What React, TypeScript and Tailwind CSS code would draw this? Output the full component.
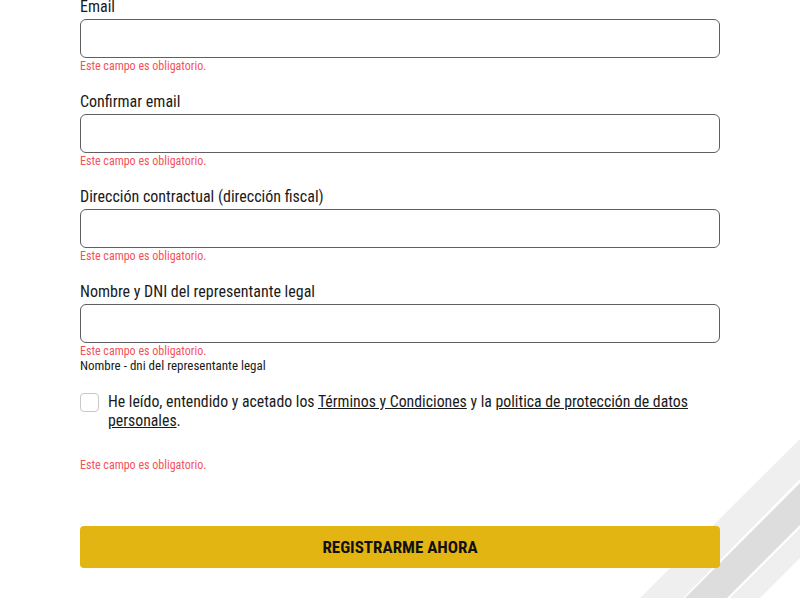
import React from "react";

const font = { fontFamily: '"Liberation Sans Narrow", "Roboto Condensed", Roboto, sans-serif' };

function Field({ label, helper }: { label: string; helper?: string }) {
  return (
    <div className="mb-[19px]">
      <div className="h-[20px] text-[16px] leading-[20px] text-[#1a1a1a]">{label}</div>
      <div className="mt-[2px] h-[39px] w-full rounded-[6px] border border-[#5f5f5f] bg-white" />
      <div className="mt-[1px] h-[14px] text-[12px] leading-[14px] text-[#f4515a]">Este campo es obligatorio.</div>
      {helper && <div className="mt-[1px] h-[14px] text-[13px] leading-[14px] text-[#1a1a1a]">{helper}</div>}
    </div>
  );
}

export default function App() {
  return (
    <div className="relative h-[600px] w-[800px] overflow-hidden bg-white" style={font}>
      <svg className="absolute right-0 top-[430px]" width="170" height="170" viewBox="630 430 170 170">
        <polygon points="640,598 800,439 800,479 683,598" fill="#efefef" />
        <polygon points="685,598 800,483 800,525 727,598" fill="#dddddd" />
        <polygon points="730,598 800,528 800,558 760,598" fill="#efefef" />
      </svg>
      <div className="relative mx-[80px] -mt-[3px]">
        <Field label="Email" />
        <Field label="Confirmar email" />
        <Field label="Dirección contractual (dirección fiscal)" />
        <div>
          <div className="h-[20px] text-[16px] leading-[20px] text-[#1a1a1a]">Nombre y DNI del representante legal</div>
          <div className="mt-[2px] h-[39px] w-full rounded-[6px] border border-[#5f5f5f] bg-white" />
          <div className="mt-[1px] h-[14px] text-[12px] leading-[14px] text-[#f4515a]">Este campo es obligatorio.</div>
          <div className="mt-[1px] h-[14px] text-[13px] leading-[14px] text-[#1a1a1a]">Nombre - dni del representante legal</div>
        </div>
        <div className="mt-[19px] flex items-start gap-[9px]">
          <div className="mt-[1px] h-[19px] w-[19px] shrink-0 rounded-[4px] border border-[#c8c8c8] bg-white" />
          <div className="text-[15.8px] leading-[19px] text-[#1a1a1a]">
            He leído, entendido y acetado los <span className="underline">Términos y Condiciones</span> y la{" "}
            <span className="underline">politica de protección de datos personales</span>.
          </div>
        </div>
        <div className="mt-[28px] h-[14px] text-[12px] leading-[14px] text-[#f4515a]">Este campo es obligatorio.</div>
        <button className="mt-[54px] flex h-[42px] w-full items-center justify-center rounded-[4px] bg-[#e3b512] pt-[2px] text-[17px] font-bold text-[#111]">
          REGISTRARME AHORA
        </button>
      </div>
    </div>
  );
}
